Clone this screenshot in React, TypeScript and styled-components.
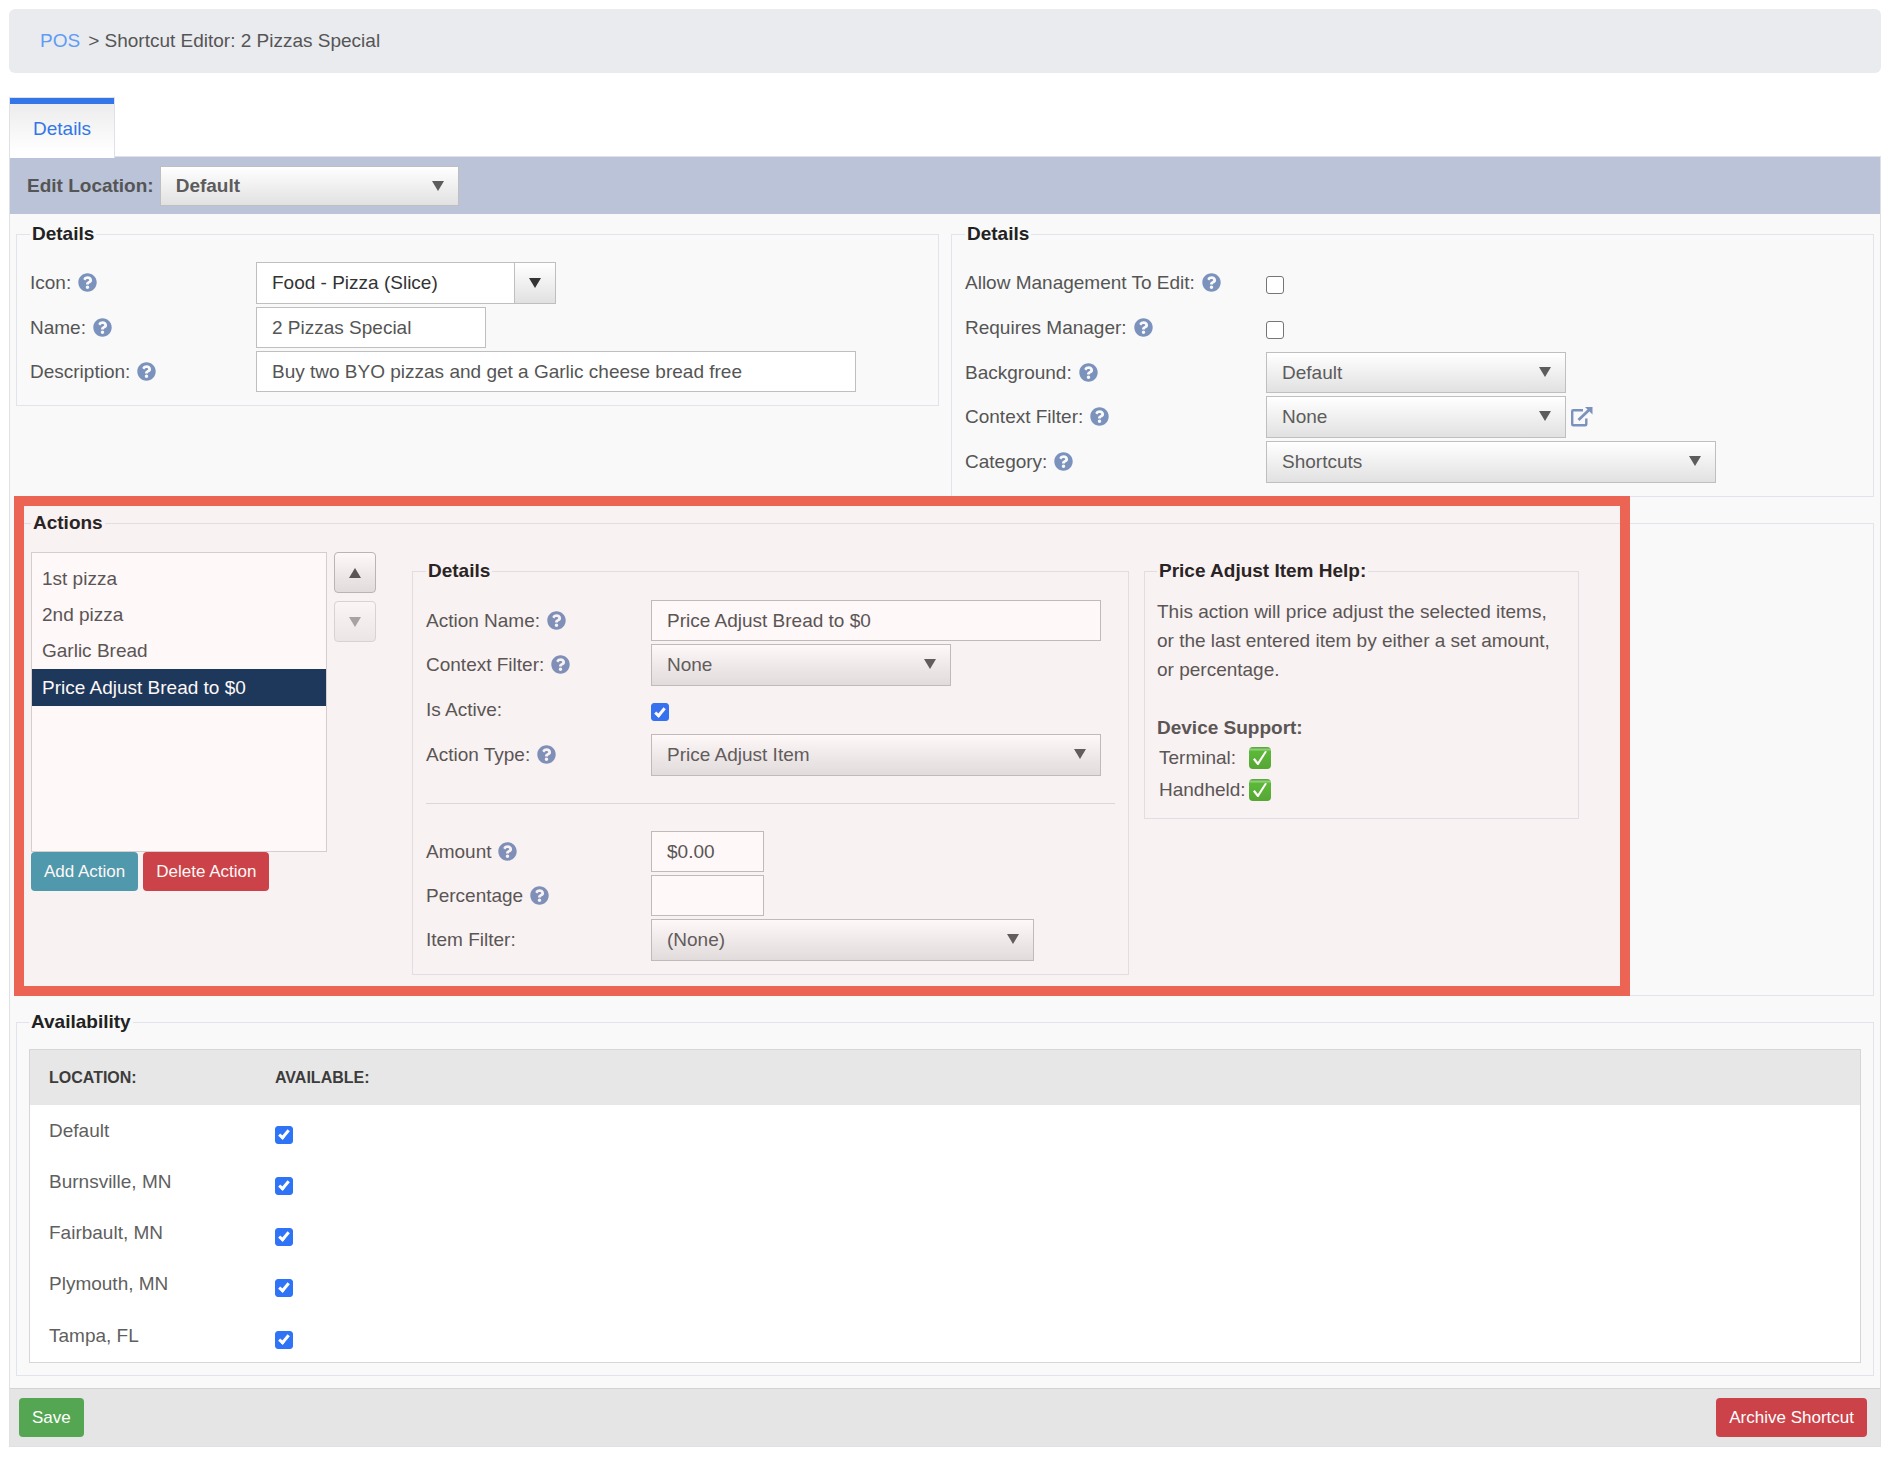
import React, { useId, useState } from "react";
import styled, { createGlobalStyle, css } from "styled-components";
import { FaQuestionCircle } from "react-icons/fa";

const GlobalStyle = createGlobalStyle`
  *, *::before, *::after { box-sizing: border-box; }
  body {
    margin: 0;
    background: #fff;
    color: #555;
    font: 19px/22px "Liberation Sans", Arial, Helvetica, sans-serif;
  }
  button, input, select { font: inherit; color: inherit; margin: 0; }
`;

const Page = styled.main`
  padding: 9px 13px 16px 9px;
`;

const Breadcrumb = styled.nav`
  display: flex;
  align-items: center;
  gap: 8px;
  height: 64px;
  padding: 0 31px;
  border-radius: 6px;
  background: #eaebef;
  a { color: #609cf5; text-decoration: none; }
`;

const Tabs = styled.div`
  display: flex;
  margin: 24px 0 -2px;
`;

const Tab = styled.button`
  position: relative;
  height: 61px;
  padding: 2px 23px 0;
  border: 1px solid #e0e1e6;
  border-bottom: 0;
  background: linear-gradient(#3376e8 6px, #ececec 6px, #fff 90%);
  color: #3376e8;
`;

const Panel = styled.section`
  border: 1px solid #dfe1e6;
  background: #f9f9f9;
`;

const LocationBar = styled.div`
  display: flex;
  align-items: center;
  gap: 6px;
  height: 57px;
  padding: 0 17px;
  background: #bac3d7;
  font-weight: bold;
`;

const Sections = styled.div`
  display: flex;
  flex-direction: column;
  gap: 15px;
  padding: 9px 6px 12px;
`;

const Columns = styled.div`
  display: grid;
  grid-template-columns: 1fr 1fr;
  align-items: start;
  gap: 12px;
`;

const Group = styled.fieldset<{ $top?: number; $side?: number; $bottom?: number }>`
  min-width: 0;
  margin: 0;
  border: 1px solid #e1e4ea;
  padding: ${(p) => `${p.$top ?? 17}px ${p.$side ?? 13}px ${p.$bottom ?? 13}px`};
`;

const Legend = styled.legend`
  padding: 0 2px;
  color: #222;
  font-weight: bold;
`;

const Rows = styled.div`
  display: flex;
  flex-direction: column;
  gap: 3px;
`;

const Row = styled.div<{ $label: number }>`
  display: grid;
  grid-template-columns: ${(p) => p.$label}px 1fr;
  align-items: start;
`;

const RowLabel = styled.div`
  display: flex;
  align-items: center;
  gap: 7px;
  height: 41px;
`;

const RowControl = styled.div`
  display: flex;
  align-items: center;
  gap: 4px;
`;

const HelpIcon = styled(FaQuestionCircle)`
  width: 19px;
  height: 19px;
  color: #7b92bd;
`;

const TextBox = styled.input<{ $width: number }>`
  width: ${(p) => p.$width}px;
  max-width: 100%;
  height: 41px;
  padding: 0 15px;
  border: 1px solid #bfbfbf;
  border-radius: 0;
  background: #fff;
`;

const triangle = css`
  content: "";
  border: 6px solid transparent;
  border-top: 10px solid currentColor;
  border-bottom: 0;
`;

const SelectBox = styled.div<{ $width: number; $height?: number }>`
  position: relative;
  width: ${(p) => p.$width}px;
  height: ${(p) => p.$height ?? 42}px;
  color: #5c5c5c;
  select {
    appearance: none;
    width: 100%;
    height: 100%;
    padding: 0 36px 0 15px;
    border: 1px solid #bfbfbf;
    border-radius: 0;
    background: linear-gradient(#fff, #e1e1e1);
  }
  &::after {
    ${triangle}
    position: absolute;
    top: 15px;
    right: 15px;
    pointer-events: none;
  }
`;

const Combo = styled.div`
  display: flex;
  width: 300px;
  height: 42px;
  border: 1px solid #bfbfbf;
  background: #fff;
  color: #333;
  input {
    flex: 1;
    min-width: 0;
    padding: 0 15px;
    border: 0;
    background: none;
  }
  button {
    display: grid;
    place-items: center;
    width: 41px;
    padding: 0;
    border: 0;
    border-left: 1px solid #bfbfbf;
    background: linear-gradient(#fff, #e1e1e1);
  }
  button::after { ${triangle} }
`;

const Check = styled.input.attrs({ type: "checkbox" })<{ $form?: boolean }>`
  appearance: none;
  display: grid;
  place-items: center;
  width: 18px;
  height: 18px;
  border: 1px solid #767676;
  border-radius: 3px;
  background: #fff;
  &:checked { border-color: #2f73f6; background: #2f73f6; }
  &:checked::after {
    content: "";
    width: 6px;
    height: 11px;
    border: solid #fff;
    border-width: 0 3px 3px 0;
    transform: translateY(-1px) rotate(40deg);
  }
  ${(p) => p.$form && css`margin: 14px 0 10px;`}
`;

const IconLink = styled.a`
  display: flex;
  color: #7b92bd;
`;

const Divider = styled.hr`
  margin: 24px 0;
  border: 0;
  border-top: 1px solid #dcdcdc;
`;

const Highlighted = styled.div`
  position: relative;
`;

const HighlightFrame = styled.div`
  position: absolute;
  inset: -16px 244px 0 -2px;
  border: 10px solid #ec6453;
  background: rgba(236, 100, 83, 0.045);
  pointer-events: none;
`;

const ActionsLayout = styled.div`
  display: flex;
  align-items: flex-start;
`;

const ActionList = styled.ul`
  width: 296px;
  height: 300px;
  margin: 0;
  padding: 8px 0;
  border: 1px solid #d4d4d4;
  background: #fff;
  list-style: none;
`;

const ActionItem = styled.li<{ $selected: boolean }>`
  padding: 7px 10px;
  cursor: default;
  ${(p) => p.$selected && css`padding-block: 8px 7px; background: #14375b; color: #fff;`}
`;

const ButtonRow = styled.div`
  display: flex;
  gap: 5px;
`;

const Button = styled.button<{ $color: string }>`
  height: 39px;
  padding: 0 13px;
  border: 0;
  border-radius: 4px;
  background: ${(p) => p.$color};
  color: #fff;
  font-size: 17px;
`;

const Movers = styled.div`
  display: flex;
  flex-direction: column;
  gap: 8px;
  margin: 0 36px 0 7px;
`;

const MoveButton = styled.button<{ $down?: boolean }>`
  display: grid;
  place-items: center;
  width: 42px;
  height: 41px;
  padding: 0;
  border: 1px solid #b8b8b8;
  border-radius: 4px;
  background: linear-gradient(#fff, #e1e1e1);
  color: #555;
  &::after {
    ${triangle}
    ${(p) => !p.$down && css`transform: rotate(180deg);`}
  }
  &:disabled { opacity: 0.5; }
`;

const ActionForms = styled.div`
  display: grid;
  grid-template-columns: 717px 435px;
  align-items: start;
  gap: 15px;
  padding-top: 8px;
`;

const HelpText = styled.p`
  margin: 0 0 29px;
  line-height: 29px;
`;

const SupportTable = styled.table`
  border-collapse: collapse;
  caption { text-align: left; font-weight: bold; line-height: 29px; white-space: nowrap; }
  th { width: 92px; height: 32px; padding: 0 0 0 2px; font-weight: normal; text-align: left; white-space: nowrap; }
  td { padding: 0; }
  svg { display: block; }
`;

const LocationTable = styled.table`
  width: 100%;
  border: 1px solid #d6d6d6;
  border-spacing: 0;
  background: #fff;
  th, td { padding: 0 19px; text-align: left; }
  th { height: 55px; background: #e7e7e7; color: #3c3c3c; font-size: 16px; }
  th:first-child { width: 226px; }
  td { height: 51px; color: #5f5f5f; }
  td + td { padding-top: 8px; }
  tr:last-child td { height: 53px; }
`;

const Footer = styled.footer`
  display: flex;
  justify-content: space-between;
  padding: 9px 13px 9px 9px;
  border-top: 1px solid #d3d3d3;
  background: #e5e5e5;
`;

type FieldProps = {
  label: string;
  help?: boolean;
  labelWidth?: number;
  children: (id: string) => React.ReactNode;
};

function Field({ label, help = true, labelWidth = 226, children }: FieldProps) {
  const id = useId();
  return (
    <Row $label={labelWidth}>
      <RowLabel>
        <label htmlFor={id}>{label}</label>
        {help && <HelpIcon aria-hidden />}
      </RowLabel>
      <RowControl>{children(id)}</RowControl>
    </Row>
  );
}

function Select({ id, value, width, height }: { id: string; value: string; width: number; height?: number }) {
  return (
    <SelectBox $width={width} $height={height}>
      <select id={id} defaultValue={value}>
        <option>{value}</option>
      </select>
    </SelectBox>
  );
}

function OpenIcon() {
  return (
    <svg width="23" height="22" viewBox="0 0 23 22" fill="none" stroke="currentColor" strokeWidth="2.4">
      <path d="M13 4.200H3.200Q2.200 4.200 2.200 5.200V18.300Q2.200 19.300 3.200 19.300H15.300Q16.300 19.300 16.300 18.300V12.500" />
      <path d="M8.500 14 19.500 3.500" strokeWidth="2.800" />
      <path d="M15 1H22.500V8.500z" fill="currentColor" stroke="none" />
    </svg>
  );
}

function SupportedIcon() {
  return (
    <svg width="22" height="22" viewBox="0 0 22 22" role="img" aria-label="Supported">
      <defs>
        <linearGradient id="supported" x2="0" y2="1">
          <stop offset="0" stopColor="#45a52f" />
          <stop offset="0.12" stopColor="#8fd67c" />
          <stop offset="0.2" stopColor="#55bd38" />
          <stop offset="1" stopColor="#50aa33" />
        </linearGradient>
      </defs>
      <rect width="22" height="22" rx="4" fill="url(#supported)" />
      <path d="M4 12.5 5.8 11l3 4L16 4l2 .6L9.500 18H8.300z" fill="#fff" />
    </svg>
  );
}

const actions = ["1st pizza", "2nd pizza", "Garlic Bread", "Price Adjust Bread to $0"];
const locations = ["Default", "Burnsville, MN", "Fairbault, MN", "Plymouth, MN", "Tampa, FL"];
const devices = ["Terminal:", "Handheld:"];

export default function App() {
  const [selected, setSelected] = useState(3);
  return (
    <Page>
      <GlobalStyle />
      <Breadcrumb>
        <a href="#pos">POS</a>
        <span>&gt; Shortcut Editor: 2 Pizzas Special</span>
      </Breadcrumb>
      <Tabs role="tablist">
        <Tab role="tab" aria-selected>Details</Tab>
      </Tabs>
      <Panel>
        <LocationBar>
          <label htmlFor="edit-location">Edit Location:</label>
          <Select id="edit-location" value="Default" width={299} height={40} />
        </LocationBar>
        <Sections>
          <Columns>
            <Group>
              <Legend>Details</Legend>
              <Rows>
                <Field label="Icon:">
                  {(id) => (
                    <Combo>
                      <input id={id} defaultValue="Food - Pizza (Slice)" />
                      <button type="button" aria-label="Choose icon" />
                    </Combo>
                  )}
                </Field>
                <Field label="Name:">{(id) => <TextBox id={id} $width={230} defaultValue="2 Pizzas Special" />}</Field>
                <Field label="Description:">
                  {(id) => (
                    <TextBox id={id} $width={600} defaultValue="Buy two BYO pizzas and get a Garlic cheese bread free" />
                  )}
                </Field>
              </Rows>
            </Group>
            <Group>
              <Legend>Details</Legend>
              <Rows>
                <Field label="Allow Management To Edit:" labelWidth={301}>{(id) => <Check id={id} $form />}</Field>
                <Field label="Requires Manager:" labelWidth={301}>{(id) => <Check id={id} $form />}</Field>
                <Field label="Background:" labelWidth={301}>
                  {(id) => <Select id={id} value="Default" width={300} height={41} />}
                </Field>
                <Field label="Context Filter:" labelWidth={301}>
                  {(id) => (
                    <>
                      <Select id={id} value="None" width={300} />
                      <IconLink href="#context-filter" aria-label="Open context filter"><OpenIcon /></IconLink>
                    </>
                  )}
                </Field>
                <Field label="Category:" labelWidth={301}>{(id) => <Select id={id} value="Shortcuts" width={450} />}</Field>
              </Rows>
            </Group>
          </Columns>

          <Highlighted>
            <Group $top={18} $side={14} $bottom={20}>
              <Legend>Actions</Legend>
              <ActionsLayout>
                <div>
                  <ActionList role="listbox" aria-label="Actions">
                    {actions.map((name, i) => (
                      <ActionItem
                        key={name}
                        role="option"
                        aria-selected={i === selected}
                        $selected={i === selected}
                        onClick={() => setSelected(i)}
                      >
                        {name}
                      </ActionItem>
                    ))}
                  </ActionList>
                  <ButtonRow>
                    <Button $color="#4a9bb0">Add Action</Button>
                    <Button $color="#ca4148">Delete Action</Button>
                  </ButtonRow>
                </div>
                <Movers>
                  <MoveButton aria-label="Move up" />
                  <MoveButton aria-label="Move down" $down disabled={selected === actions.length - 1} />
                </Movers>
                <ActionForms>
                  <Group $top={18}>
                    <Legend>Details</Legend>
                    <Rows>
                      <Field label="Action Name:" labelWidth={225}>
                        {(id) => <TextBox id={id} $width={450} defaultValue="Price Adjust Bread to $0" />}
                      </Field>
                      <Field label="Context Filter:" labelWidth={225}>{(id) => <Select id={id} value="None" width={300} />}</Field>
                      <Field label="Is Active:" help={false} labelWidth={225}>
                        {(id) => <Check id={id} $form defaultChecked />}
                      </Field>
                      <Field label="Action Type:" labelWidth={225}>
                        {(id) => <Select id={id} value="Price Adjust Item" width={450} />}
                      </Field>
                      <Divider />
                      <Field label="Amount" labelWidth={225}>{(id) => <TextBox id={id} $width={113} defaultValue="$0.00" />}</Field>
                      <Field label="Percentage" labelWidth={225}>{(id) => <TextBox id={id} $width={113} />}</Field>
                      <Field label="Item Filter:" help={false} labelWidth={225}>
                        {(id) => <Select id={id} value="(None)" width={383} />}
                      </Field>
                    </Rows>
                  </Group>
                  <Group $top={15} $side={12} $bottom={12}>
                    <Legend>Price Adjust Item Help:</Legend>
                    <HelpText>
                      This action will price adjust the selected items, or the last entered item by either a set amount, or
                      percentage.
                    </HelpText>
                    <SupportTable>
                      <caption>Device Support:</caption>
                      <tbody>
                        {devices.map((device) => (
                          <tr key={device}>
                            <th scope="row">{device}</th>
                            <td><SupportedIcon /></td>
                          </tr>
                        ))}
                      </tbody>
                    </SupportTable>
                  </Group>
                </ActionForms>
              </ActionsLayout>
            </Group>
            <HighlightFrame />
          </Highlighted>

          <Group $top={16} $side={12} $bottom={12}>
            <Legend>Availability</Legend>
            <LocationTable>
              <thead>
                <tr>
                  <th scope="col">LOCATION:</th>
                  <th scope="col">AVAILABLE:</th>
                </tr>
              </thead>
              <tbody>
                {locations.map((name) => (
                  <tr key={name}>
                    <td>{name}</td>
                    <td><Check aria-label={name} defaultChecked /></td>
                  </tr>
                ))}
              </tbody>
            </LocationTable>
          </Group>
        </Sections>
        <Footer>
          <Button $color="#54a653">Save</Button>
          <Button $color="#cb4249">Archive Shortcut</Button>
        </Footer>
      </Panel>
    </Page>
  );
}
